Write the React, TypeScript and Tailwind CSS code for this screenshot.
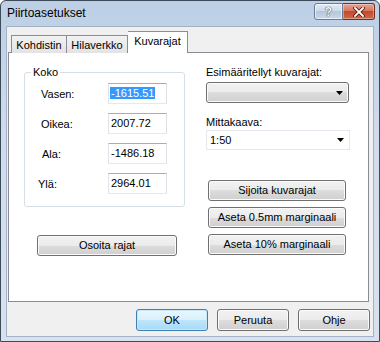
import React from 'react'

const btn =
  'flex items-center justify-center rounded-[3px] border border-[#707070] bg-[linear-gradient(to_bottom,#f2f2f2_0%,#ebebeb_50%,#dddddd_50%,#cfcfcf_100%)] shadow-[inset_0_0_0_1px_#fbfbfb] text-[11px] text-black'

function Arrow() {
  return (
    <svg width="7" height="4" viewBox="0 0 7 4" className="mr-[5px]">
      <path d="M0 0h7L3.5 4z" fill="#000" />
    </svg>
  )
}

function Field({ label, value, selected, labelClass }: { label: string; value: string; selected?: boolean; labelClass?: string }) {
  return (
    <div className="flex h-[21px] items-center">
      <span className="w-[67px] shrink-0 pt-[2px]">
        <span className={`inline-block ${labelClass ?? ''}`}>{label}</span>
      </span>
      <div className="h-[21px] w-[59px] shrink-0 border border-[#abadb3] border-b-[#e3e9ef] border-r-[#dbdfe6] border-l-[#e2e3ea] bg-white pl-[1px] pt-[2px] leading-[14px]">
        {selected ? (
          <span className="bg-[#3399ff] px-[1px] text-white">{value}</span>
        ) : (
          <span className="px-[1px]">{value}</span>
        )}
      </div>
    </div>
  )
}

export default function App() {
  return (
    <div
      className="flex h-[342px] w-[380px] flex-col rounded-t-[6px] border border-[#3d4a59] bg-[linear-gradient(to_bottom,#bccfe5,#cfdced_40%,#d6e2ef)] text-black"
      style={{ fontFamily: '"Liberation Sans", Arial, sans-serif' }}
    >
      {/* title bar */}
      <div className="flex h-[25px] shrink-0 items-start">
        <span className="ml-[6px] mt-[5px] text-[12px] leading-[15px]">Piirtoasetukset</span>
        <div className="ml-auto mr-[4px] mt-[2px] flex h-[17px]">
          <div className="flex w-[29px] items-center justify-center rounded-l-[3px] border border-[#6a7c91] bg-[linear-gradient(to_bottom,#e4ecf5,#cbd8e7_50%,#b5c7db_50%,#c9d8e8)] shadow-[inset_0_0_0_1px_rgba(255,255,255,0.6)]">
            <span className="text-[12px] font-bold leading-none text-[#f4f7fb] [text-shadow:0_0_1px_#2c3e55,0_0_1px_#2c3e55]">?</span>
          </div>
          <div className="flex w-[32px] items-center justify-center rounded-r-[3px] border border-l-0 border-[#6e3024] bg-[linear-gradient(to_bottom,#e8a493,#d7785f_45%,#c4482c_50%,#d26a45)] shadow-[inset_0_0_0_1px_rgba(255,255,255,0.35)]">
            <svg width="12" height="10" viewBox="0 0 12 10">
              <path d="M2 1l8 8M10 1l-8 8" stroke="#4a1a10" strokeWidth="3.4" strokeLinecap="square" />
              <path d="M2 1l8 8M10 1l-8 8" stroke="#fff" strokeWidth="1.8" strokeLinecap="square" />
            </svg>
          </div>
        </div>
      </div>

      {/* client area */}
      <div className="mx-[5px] mb-[4px] flex flex-1 flex-col border border-[#a3b3c5] bg-[#f0f0f0] pl-[1px] pt-[4px] text-[11px]">
        {/* tabs */}
        <div className="relative z-10 -mb-px flex h-[22px] items-end pl-[3px]">
          <div className="flex h-[18px] w-[56px] items-center justify-center border border-b-0 border-[#898c95] bg-[linear-gradient(to_bottom,#f2f2f2,#e3e3e3)] pt-px">
            Kohdistin
          </div>
          <div className="flex h-[18px] w-[61px] items-center justify-center border border-b-0 border-l-0 border-[#898c95] bg-[linear-gradient(to_bottom,#f2f2f2,#e3e3e3)] pt-px">
            Hilaverkko
          </div>
          <div className="flex h-[22px] w-[60px] items-center justify-center border border-b-0 border-l-0 border-[#898c95] bg-white pb-[2px]">
            Kuvarajat
          </div>
        </div>

        {/* tab panel */}
        <div className="flex h-[250px] w-[361px] border border-[#898c95] bg-white">
          {/* left column */}
          <div className="ml-[15px] mt-[19px] flex w-[161px] flex-col">
            <div className="relative h-[135px] rounded-[3px] border border-[#d5dfe5]">
              <span className="absolute -top-[8px] left-[6px] bg-white px-[2px] leading-[14px]">Koko</span>
              <div className="flex flex-col gap-[9px] pl-[16px] pt-[10px]">
                <Field label="Vasen:" value="-1615.51" selected />
                <Field label="Oikea:" value="2007.72" />
                <Field label="Ala:" value="-1486.18" labelClass="translate-x-[1px]" />
                <Field label="Ylä:" value="2964.01" labelClass="-translate-x-[3px]" />
              </div>
            </div>
            <div className={`${btn} ml-[13px] mt-[28px] h-[21px] w-[140px]`}>Osoita rajat</div>
          </div>

          {/* right column */}
          <div className="ml-[21px] flex flex-col">
            <span className="mt-[12px] leading-[14px]">Esimääritellyt kuvarajat:</span>
            <div className={`${btn} mt-[3px] h-[21px] w-[143px] justify-end`}>
              <Arrow />
            </div>
            <span className="mt-[12px] leading-[14px]">Mittakaava:</span>
            <div className="mt-[1px] flex h-[20px] w-[144px] items-center justify-between border border-[#e4e8ee] bg-white pl-[3px]">
              <span>1:50</span>
              <Arrow />
            </div>
            <div className="ml-[2px] mt-[30px] flex flex-col gap-[6px]">
              <div className={`${btn} h-[21px] w-[138px]`}>Sijoita kuvarajat</div>
              <div className={`${btn} h-[21px] w-[138px]`}>Aseta 0.5mm marginaali</div>
              <div className={`${btn} h-[21px] w-[138px]`}>Aseta 10% marginaali</div>
            </div>
          </div>
        </div>

        {/* dialog buttons */}
        <div className="mt-[7px] flex justify-end gap-[9px] pr-[3px]">
          <div className="flex h-[22px] w-[72px] items-center justify-center rounded-[3px] border border-[#3c7fb1] bg-[linear-gradient(to_bottom,#eaf6fd_0%,#d9f0fc_50%,#bee6fd_50%,#a7d9f5_100%)] shadow-[inset_0_0_0_1px_#c8e9fa]">
            OK
          </div>
          <div className={`${btn} h-[22px] w-[72px]`}>Peruuta</div>
          <div className={`${btn} h-[22px] w-[72px]`}>Ohje</div>
        </div>
      </div>
    </div>
  )
}
